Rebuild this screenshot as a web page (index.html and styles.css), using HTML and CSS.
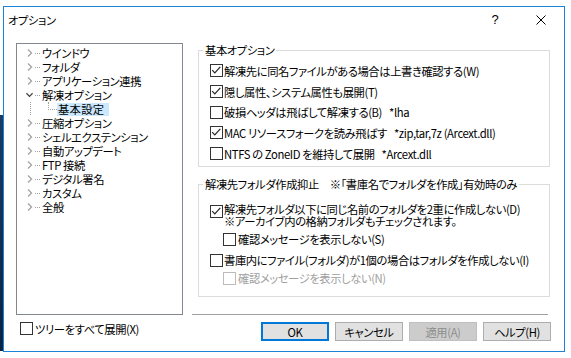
FILE: index.html
```html
<!DOCTYPE html>
<html lang="ja">
<head>
    <meta charset="UTF-8">
    <meta name="viewport" content="width=device-width, initial-scale=1.0">
    <title>オプション</title>
    <link rel="stylesheet" href="styles.css">
</head>
<body>
    <div class="dialog">
        <div class="titlebar">
            <span class="title">オプション</span>
            <span class="tb-btn help">?</span>
            <span class="tb-btn close">
                <svg width="10" height="10" viewBox="0 0 10 10"><path d="M0.5 0.5L9.5 9.5M9.5 0.5L0.5 9.5" stroke="#000" stroke-width="1" fill="none"/></svg>
            </span>
        </div>

        <div class="main">
            <div class="left">
                <ul class="tree">
                    <li class="node"><span class="exp"><svg width="6" height="8" viewBox="0 0 6 8"><path d="M1 0.5L4.5 4L1 7.5" stroke="#a6a6a6" stroke-width="1.4" fill="none"/></svg></span><span class="dots"></span><span class="label">ウインドウ</span></li>
                    <li class="node"><span class="exp"><svg width="6" height="8" viewBox="0 0 6 8"><path d="M1 0.5L4.5 4L1 7.5" stroke="#a6a6a6" stroke-width="1.4" fill="none"/></svg></span><span class="dots"></span><span class="label">フォルダ</span></li>
                    <li class="node"><span class="exp"><svg width="6" height="8" viewBox="0 0 6 8"><path d="M1 0.5L4.5 4L1 7.5" stroke="#a6a6a6" stroke-width="1.4" fill="none"/></svg></span><span class="dots"></span><span class="label">アプリケーション連携</span></li>
                    <li class="node"><span class="exp"><svg width="8" height="6" viewBox="0 0 8 6"><path d="M0.5 1L4 4.5L7.5 1" stroke="#404040" stroke-width="1.4" fill="none"/></svg></span><span class="dots"></span><span class="label">解凍オプション</span></li>
                    <li class="node child"><span class="branch"></span><span class="label selected">基本設定</span></li>
                    <li class="node"><span class="exp"><svg width="6" height="8" viewBox="0 0 6 8"><path d="M1 0.5L4.5 4L1 7.5" stroke="#a6a6a6" stroke-width="1.4" fill="none"/></svg></span><span class="dots"></span><span class="label">圧縮オプション</span></li>
                    <li class="node"><span class="exp"><svg width="6" height="8" viewBox="0 0 6 8"><path d="M1 0.5L4.5 4L1 7.5" stroke="#a6a6a6" stroke-width="1.4" fill="none"/></svg></span><span class="dots"></span><span class="label">シェルエクステンション</span></li>
                    <li class="node"><span class="exp"><svg width="6" height="8" viewBox="0 0 6 8"><path d="M1 0.5L4.5 4L1 7.5" stroke="#a6a6a6" stroke-width="1.4" fill="none"/></svg></span><span class="dots"></span><span class="label">自動アップデート</span></li>
                    <li class="node"><span class="exp"><svg width="6" height="8" viewBox="0 0 6 8"><path d="M1 0.5L4.5 4L1 7.5" stroke="#a6a6a6" stroke-width="1.4" fill="none"/></svg></span><span class="dots"></span><span class="label">FTP 接続</span></li>
                    <li class="node"><span class="exp"><svg width="6" height="8" viewBox="0 0 6 8"><path d="M1 0.5L4.5 4L1 7.5" stroke="#a6a6a6" stroke-width="1.4" fill="none"/></svg></span><span class="dots"></span><span class="label">デジタル署名</span></li>
                    <li class="node"><span class="exp"><svg width="6" height="8" viewBox="0 0 6 8"><path d="M1 0.5L4.5 4L1 7.5" stroke="#a6a6a6" stroke-width="1.4" fill="none"/></svg></span><span class="dots"></span><span class="label">カスタム</span></li>
                    <li class="node"><span class="exp"><svg width="6" height="8" viewBox="0 0 6 8"><path d="M1 0.5L4.5 4L1 7.5" stroke="#a6a6a6" stroke-width="1.4" fill="none"/></svg></span><span class="dots"></span><span class="label">全般</span></li>
                </ul>
                <div class="check expand-all"><span class="cb"></span><span>ツリーをすべて展開(X)</span></div>
            </div>

            <div class="right">
                <div class="group basic">
                    <div class="legend">基本オプション</div>
                    <div class="check"><span class="cb"><svg width="11" height="11" viewBox="0 0 11 11"><path d="M1.2 5.2L3.8 7.8L9.3 1.8" stroke="#222" stroke-width="1.2" fill="none"/></svg></span><span>解凍先に同名ファイルがある場合は上書き確認する(W)</span></div>
                    <div class="check"><span class="cb"><svg width="11" height="11" viewBox="0 0 11 11"><path d="M1.2 5.2L3.8 7.8L9.3 1.8" stroke="#222" stroke-width="1.2" fill="none"/></svg></span><span>隠し属性、システム属性も展開(T)</span></div>
                    <div class="check"><span class="cb"></span><span>破損ヘッダは飛ばして解凍する(B)</span><span class="note">*lha</span></div>
                    <div class="check"><span class="cb"><svg width="11" height="11" viewBox="0 0 11 11"><path d="M1.2 5.2L3.8 7.8L9.3 1.8" stroke="#222" stroke-width="1.2" fill="none"/></svg></span><span>MAC リソースフォークを読み飛ばす</span><span class="note">*zip,tar,7z (Arcext.dll)</span></div>
                    <div class="check"><span class="cb"></span><span>NTFS の ZoneID を維持して展開</span><span class="note">*Arcext.dll</span></div>
                </div>

                <div class="group extract">
                    <div class="legend">解凍先フォルダ作成抑止　※「書庫名でフォルダを作成」有効時のみ</div>
                    <div class="check multi"><span class="cb"><svg width="11" height="11" viewBox="0 0 11 11"><path d="M1.2 5.2L3.8 7.8L9.3 1.8" stroke="#222" stroke-width="1.2" fill="none"/></svg></span><span>解凍先フォルダ以下に同じ名前のフォルダを2重に作成しない(D)<br>※アーカイブ内の格納フォルダもチェックされます。</span></div>
                    <div class="check sub first"><span class="cb"></span><span>確認メッセージを表示しない(S)</span></div>
                    <div class="check"><span class="cb"></span><span>書庫内にファイル(フォルダ)が1個の場合はフォルダを作成しない(I)</span></div>
                    <div class="check sub last disabled"><span class="cb"></span><span>確認メッセージを表示しない(N)</span></div>
                </div>

                <div class="sep"></div>

                <div class="buttons">
                    <span class="btn default">OK</span>
                    <span class="btn">キャンセル</span>
                    <span class="btn disabled">適用(A)</span>
                    <span class="btn">ヘルプ(H)</span>
                </div>
            </div>
        </div>
    </div>
</body>
</html>
```

FILE: styles.css
```css
body {
    margin: 0;
    width: 571px;
    height: 358px;
    overflow: hidden;
    font-family: "Noto Sans CJK JP", sans-serif;
    font-size: 11.3px;
    font-feature-settings: "palt";
    letter-spacing: -0.4px;
    color: #000;
    background: linear-gradient(#1d3c63, #0b2340) no-repeat 0 115px / 3px 236px, #fff;
}

.dialog {
    margin: 6px 0 0 3px;
    width: 562px;
    height: 346px;
    box-sizing: border-box;
    border: 1px solid #1883d7;
    background-color: #fff;
}

/* タイトルバー */
.titlebar {
    display: flex;
    align-items: center;
    height: 30px;
    padding-bottom: 4px;
    box-sizing: border-box;
}

.title {
    flex: 1;
    padding-left: 4px;
    line-height: 14px;
}

.tb-btn {
    width: 46px;
    display: flex;
    justify-content: center;
    align-items: center;
}

.help {
    font-family: "Liberation Sans", sans-serif;
    font-size: 13px;
    line-height: 14px;
}

.main {
    display: flex;
    padding: 6px 0 0 12px;
}

/* ツリー */
.left {
    width: 167px;
}

.tree {
    margin: 0;
    padding: 2px 0 0 0;
    list-style: none;
    height: 272px;
    box-sizing: border-box;
    border: 1px solid #828790;
    background-image: repeating-linear-gradient(to bottom, #a0a0a0 0 1px, transparent 1px 2px);
    background-repeat: no-repeat;
    background-size: 1px 157px;
    background-position: 13px 6px;
}

.node {
    display: flex;
    align-items: center;
    height: 14px;
    white-space: nowrap;
}

.exp {
    width: 7px;
    height: 14px;
    margin-left: 9px;
    display: flex;
    align-items: center;
    justify-content: center;
    background-color: #fff;
}

.dots {
    width: 7px;
    height: 1px;
    margin-left: 1px;
    background: repeating-linear-gradient(to right, transparent 0 1px, #a0a0a0 1px 2px);
}

.label {
    margin-left: 1px;
    line-height: 14px;
}

.child {
    padding-left: 31px;
}

.branch {
    align-self: flex-start;
    width: 8px;
    height: 7px;
    border-left: 1px dotted #a0a0a0;
    border-bottom: 1px dotted #a0a0a0;
}

.child .label {
    margin-left: 0;
}

.selected {
    background-color: #cce8ff;
    padding: 0 5px 0 1px;
    line-height: 13px;
    letter-spacing: 0.3px;
}

/* チェックボックス */
.check {
    display: flex;
    align-items: center;
    gap: 1px;
    height: 20.7px;
    white-space: nowrap;
}

.cb {
    width: 13px;
    height: 13px;
    box-sizing: border-box;
    flex-shrink: 0;
    display: flex;
    align-items: center;
    justify-content: center;
    border: 1px solid #333;
    background-color: #fff;
}

.note {
    margin-left: 6px;
}

.expand-all {
    height: 13px;
    margin: 7px 0 0 4px;
    gap: 2px;
}

/* 右側 */
.right {
    width: 359px;
    margin-left: 9px;
}

.group {
    width: 352px;
    margin-left: 6px;
    padding-left: 11px;
    box-sizing: border-box;
    border: 1px solid #dcdcdc;
}

.legend {
    width: max-content;
    margin: -8px 0 0 -7px;
    padding: 0 2px;
    line-height: 14px;
    white-space: nowrap;
    background-color: #fff;
}

.basic {
    margin-top: 7px;
    height: 117px;
}

.basic .legend {
    margin-bottom: 3.5px;
}

.extract {
    margin-top: 17px;
    height: 113px;
}

.extract .legend {
    margin-bottom: 12px;
}

.multi {
    height: auto;
    align-items: flex-start;
    line-height: 12px;
}

.multi .cb {
    margin-top: 2px;
}

.sub {
    margin-left: 13px;
    gap: 2px;
}

.sub.first {
    margin-top: 2px;
}

.sub.last {
    height: 16px;
}

.disabled {
    color: #a0a0a0;
}

.disabled .cb {
    border-color: #bcbcbc;
}

.sep {
    width: 356px;
    height: 1px;
    margin-top: 17px;
    background-color: #a0a0a0;
}

.buttons {
    display: flex;
    justify-content: flex-end;
    gap: 6px;
    margin-top: 7px;
}

.btn {
    width: 68px;
    height: 19px;
    box-sizing: border-box;
    display: flex;
    align-items: center;
    justify-content: center;
    line-height: 14px;
    border: 1px solid #adadad;
    background-color: #e1e1e1;
}

.btn.default {
    border: 2px solid #0078d7;
}

.btn.disabled {
    color: #8c8c8c;
    background-color: #cccccc;
    border-color: #bfbfbf;
}
```
